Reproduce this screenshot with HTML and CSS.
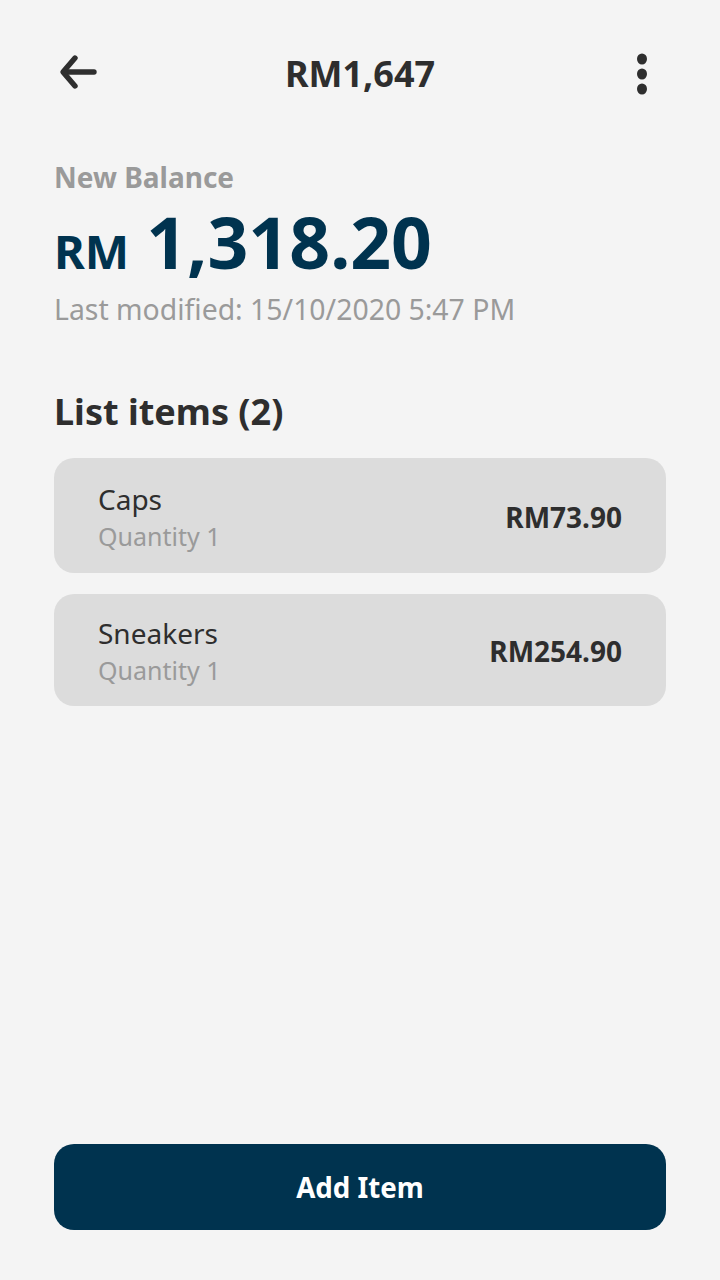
FILE: index.html
```html
<!DOCTYPE html>
<html lang="en">
<head>
<meta charset="utf-8">
<title>RM1,647</title>
<link rel="stylesheet" href="styles.css">
</head>
<body>
<div class="screen">
  <header class="topbar">
    <button class="icon-btn back" aria-label="Back">
      <svg width="40" height="40" viewBox="0 0 40 40" fill="none" stroke="#2e2e2e" stroke-width="5.4" stroke-linecap="round" stroke-linejoin="round">
        <path d="M36 18H6"/>
        <path d="M17 4L5 18L17 32"/>
      </svg>
    </button>
    <h1 class="title">RM1,647</h1>
    <button class="icon-btn more" aria-label="More">
      <svg width="14" height="42" viewBox="0 0 14 42" fill="#2e2e2e">
        <ellipse cx="7" cy="6" rx="5" ry="5.5"/>
        <ellipse cx="7" cy="21" rx="5" ry="5.5"/>
        <ellipse cx="7" cy="36" rx="5" ry="5.5"/>
      </svg>
    </button>
  </header>

  <section class="balance">
    <div class="balance-label">New Balance</div>
    <div class="balance-amount"><span class="currency">RM</span><span class="value">1,318.20</span></div>
    <div class="balance-meta">Last modified: 15/10/2020 5:47 PM</div>
  </section>

  <section class="items">
    <h2 class="items-title">List items (2)</h2>
    <div class="item-card">
      <div class="item-info">
        <div class="item-name">Caps</div>
        <div class="item-qty">Quantity 1</div>
      </div>
      <div class="item-price">RM73.90</div>
    </div>
    <div class="item-card">
      <div class="item-info">
        <div class="item-name">Sneakers</div>
        <div class="item-qty">Quantity 1</div>
      </div>
      <div class="item-price">RM254.90</div>
    </div>
  </section>

  <div class="spacer"></div>

  <button class="primary-btn">Add Item</button>
</div>
</body>
</html>
```

FILE: styles.css
```css
* { box-sizing: border-box; }

html, body {
  margin: 0;
  padding: 0;
  background: #f4f4f4;
}

body {
  font-family: "Noto Sans", "Open Sans", sans-serif;
  color: #2e2e2e;
}

.screen {
  min-height: 1280px;
  display: flex;
  flex-direction: column;
  padding: 0 54px 50px;
}

.topbar {
  height: 159px;
  display: grid;
  grid-template-columns: 1fr auto 1fr;
  align-items: center;
  padding-bottom: 11px;
}

.icon-btn {
  background: none;
  border: 0;
  padding: 0;
  display: flex;
  align-items: center;
  cursor: pointer;
}

.back {
  justify-self: start;
  margin-left: 4px;
}

.more {
  justify-self: end;
  margin-right: 17px;
}

.title {
  margin: 0;
  font-size: 36px;
  line-height: 44px;
  font-weight: 700;
  color: #2e2e2e;
}

.balance-label {
  font-size: 28px;
  line-height: 36px;
  font-weight: 700;
  color: #9a9a9a;
}

.balance-amount {
  margin-top: 11px;
  display: flex;
  align-items: baseline;
  gap: 17px;
  color: #00334f;
  font-weight: 700;
}

.currency {
  font-size: 47px;
  line-height: 1;
}

.value {
  font-size: 71.5px;
  line-height: 72px;
}

.balance-meta {
  margin-top: 13px;
  font-size: 28.4px;
  line-height: 36px;
  color: #9a9a9a;
}

.items {
  margin-top: 63px;
  display: flex;
  flex-direction: column;
  gap: 21px;
}

.items-title {
  margin: 0 0 3px;
  font-size: 36px;
  line-height: 44px;
  font-weight: 700;
  color: #2e2e2e;
}

.item-card {
  background: #dcdcdc;
  border-radius: 20px;
  padding: 23px 44px 20px;
  display: flex;
  align-items: center;
  justify-content: space-between;
}

.item-card + .item-card {
  padding-top: 21px;
  padding-bottom: 19px;
}

.item-info {
  display: flex;
  flex-direction: column;
  gap: 2px;
}

.item-name {
  font-size: 28px;
  line-height: 36px;
  color: #2e2e2e;
}

.item-qty {
  font-size: 25px;
  line-height: 34px;
  color: #9a9a9a;
}

.item-price {
  font-size: 28px;
  line-height: 36px;
  font-weight: 700;
  color: #2e2e2e;
}

.spacer { flex: 1; }

.primary-btn {
  height: 86px;
  width: 100%;
  border: 0;
  border-radius: 20px;
  background: #00334f;
  color: #ffffff;
  font-family: "Noto Sans", "Open Sans", sans-serif;
  font-size: 27.7px;
  font-weight: 700;
  cursor: pointer;
}
```
